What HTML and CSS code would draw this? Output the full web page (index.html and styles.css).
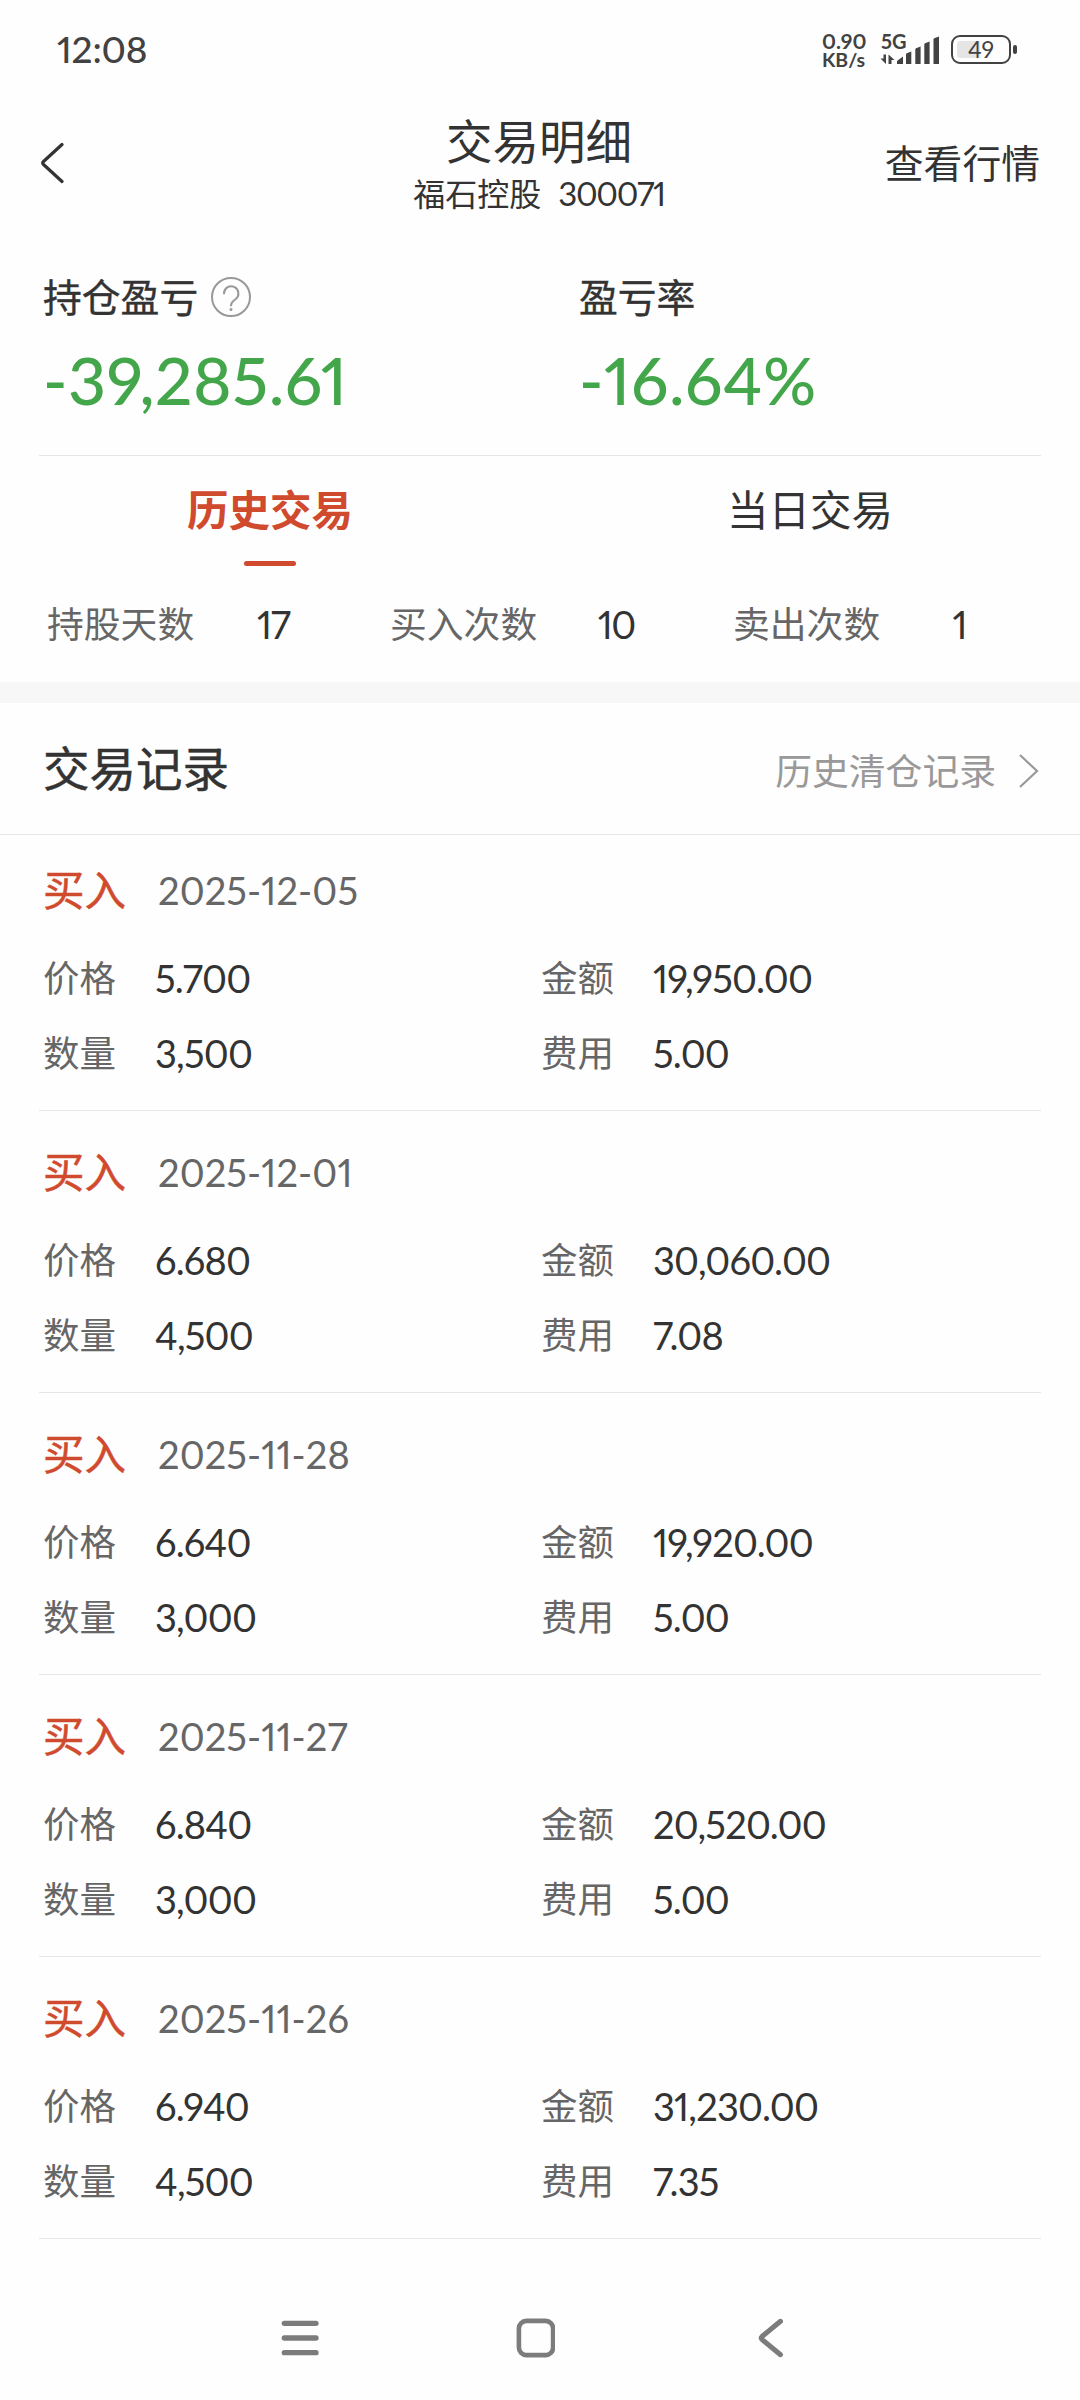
FILE: index.html
```
<!DOCTYPE html>
<html lang="zh-CN">
<head>
  <meta charset="UTF-8">
  <meta name="viewport" content="width=device-width, initial-scale=1.0">
  <title>交易明细</title>
  <link rel="stylesheet" href="styles.css">
</head>
<body>
  <div class="status-bar">
    <span class="time">12:08</span>
    <div class="net-speed"><span>0.90</span><span class="unit">KB/s</span></div>
    <div class="signal">
      <span class="network">5G</span>
      <svg width="60" height="28" viewBox="0 0 60 28" fill="#424242">
        <path d="M6 18.500v9.500L0.500 22.500H3.500V18.500zM8.500 28v-9.500l6 5.500h-3v4z"/>
        <path d="M17 28v-3l6-4.500V28zM26 28V18.500q0-.8.8-1.200l4.500-1.800V28zM35.300 28V13.500q0-.8.8-1.200l4.500-1.800V28zM44.300 28V8.500q0-.8.8-1.200l4.500-1.800V28zM53.500 28V3.500q0-.8.8-1.200L59 0.500V28z"/>
      </svg>
    </div>
    <div class="battery"><span>49</span></div>
  </div>

  <header class="header">
    <svg class="back" width="26" height="44" viewBox="0 0 26 44" fill="none" stroke="#333" stroke-width="3.2" stroke-linecap="round" stroke-linejoin="round">
      <path d="M22 3.500L3.500 20.500Q2 22 3.500 23.500L22 40.500"/>
    </svg>
    <div class="title">
      <h1>交易明细</h1>
      <p>福石控股<span>300071</span></p>
    </div>
    <a class="quote">查看行情</a>
  </header>

  <section class="summary">
    <div class="summary-item">
      <div class="summary-label">持仓盈亏
        <svg width="42" height="42" viewBox="0 0 42 42" fill="none" stroke="#999" stroke-width="2">
          <circle cx="21" cy="21" r="19"/>
          <path d="M14 17.500a7.200 7.200 0 1 1 11.800 5.500c-3 2.300-4.800 3-4.800 6.500" stroke-linecap="round"/>
          <circle cx="21" cy="33.500" r="1.500" fill="#999" stroke="none"/>
        </svg>
      </div>
      <div class="summary-value">-39,285.61</div>
    </div>
    <div class="summary-item">
      <div class="summary-label">盈亏率</div>
      <div class="summary-value">-16.64%</div>
    </div>
  </section>

  <nav class="tabs">
    <a class="tab active">历史交易</a>
    <a class="tab">当日交易</a>
  </nav>

  <div class="stats">
    <div class="stat">持股天数<span>17</span></div>
    <div class="stat">买入次数<span>10</span></div>
    <div class="stat">卖出次数<span>1</span></div>
  </div>

  <div class="records-head">
    <h2>交易记录</h2>
    <a class="history">历史清仓记录
      <svg width="22" height="36" viewBox="0 0 22 36" fill="none" stroke="#999" stroke-width="2.2">
        <path d="M2 2L19 18L2 34"/>
      </svg>
    </a>
  </div>

  <main class="records">
    <article class="record">
      <div class="record-top"><b>买入</b><time>2025-12-05</time></div>
      <dl>
        <dt>价格</dt><dd>5.700</dd><dt>金额</dt><dd>19,950.00</dd>
        <dt>数量</dt><dd>3,500</dd><dt>费用</dt><dd>5.00</dd>
      </dl>
    </article>
    <article class="record">
      <div class="record-top"><b>买入</b><time>2025-12-01</time></div>
      <dl>
        <dt>价格</dt><dd>6.680</dd><dt>金额</dt><dd>30,060.00</dd>
        <dt>数量</dt><dd>4,500</dd><dt>费用</dt><dd>7.08</dd>
      </dl>
    </article>
    <article class="record">
      <div class="record-top"><b>买入</b><time>2025-11-28</time></div>
      <dl>
        <dt>价格</dt><dd>6.640</dd><dt>金额</dt><dd>19,920.00</dd>
        <dt>数量</dt><dd>3,000</dd><dt>费用</dt><dd>5.00</dd>
      </dl>
    </article>
    <article class="record">
      <div class="record-top"><b>买入</b><time>2025-11-27</time></div>
      <dl>
        <dt>价格</dt><dd>6.840</dd><dt>金额</dt><dd>20,520.00</dd>
        <dt>数量</dt><dd>3,000</dd><dt>费用</dt><dd>5.00</dd>
      </dl>
    </article>
    <article class="record">
      <div class="record-top"><b>买入</b><time>2025-11-26</time></div>
      <dl>
        <dt>价格</dt><dd>6.940</dd><dt>金额</dt><dd>31,230.00</dd>
        <dt>数量</dt><dd>4,500</dd><dt>费用</dt><dd>7.35</dd>
      </dl>
    </article>
  </main>

  <footer class="nav-bar">
    <svg width="40" height="40" viewBox="0 0 40 40" stroke="#7c7c7c" stroke-width="5.3" stroke-linecap="round">
      <path d="M4.300 5.300H36M4.300 20H36M4.300 34.700H36"/>
    </svg>
    <svg width="40" height="40" viewBox="0 0 40 40" fill="none" stroke="#7c7c7c" stroke-width="4.6">
      <rect x="3.900" y="2.900" width="34.200" height="34.200" rx="7.500"/>
    </svg>
    <svg width="40" height="40" viewBox="0 0 40 40" fill="none" stroke="#7c7c7c" stroke-width="5" stroke-linecap="round" stroke-linejoin="round">
      <path d="M30.500 3.300L12 18.500Q10.300 20 12 21.500L30.500 36.700"/>
    </svg>
  </footer>
</body>
</html>
```
FILE: styles.css
```
* {
  box-sizing: border-box;
  margin: 0;
  padding: 0;
}

body {
  width: 1080px;
  height: 2400px;
  overflow: hidden;
  background: #fefefe;
  color: #333;
  font-family: Lato, "Noto Sans CJK SC", sans-serif;
  font-variant-numeric: proportional-nums;
  line-height: 1.2;
}

/* Status bar */
.status-bar {
  display: flex;
  align-items: center;
  height: 99px;
  margin-bottom: 1px;
  padding: 0 69px 0 57px;
  color: #424242;
}

.time {
  flex: 1;
  font-size: 37px;
  font-weight: 500;
  letter-spacing: -0.2px;
}

.net-speed {
  width: 58px;
  font-size: 21px;
  font-weight: bold;
  line-height: 19px;
}

.net-speed span {
  display: block;
}

.net-speed .unit {
  font-size: 19.5px;
}

.signal {
  position: relative;
  width: 60px;
  height: 28px;
  margin-right: 11px;
  font-weight: bold;
}

.network {
  position: absolute;
  top: -5px;
  left: 1px;
  font-size: 20px;
  line-height: 20px;
}

.signal svg {
  display: block;
}

.battery {
  position: relative;
  width: 60px;
  height: 29px;
  padding: 4px;
  border: 2.5px solid #424242;
  border-radius: 9px;
  background: linear-gradient(to right, #e5e5e5 23px, transparent 23px) content-box no-repeat;
  font-size: 23px;
  line-height: 16px;
  text-align: center;
}

.battery::after {
  content: "";
  position: absolute;
  top: 8px;
  right: -8px;
  width: 4px;
  height: 9px;
  border-radius: 2px;
  background: #424242;
}

/* Header */
.header {
  display: grid;
  grid-template-columns: 200px 1fr 200px;
  align-items: center;
  height: 126px;
  padding: 0 40px;
}

.title {
  padding: 4px 2px 0 0;
  text-align: center;
}

.title h1 {
  font-size: 46.5px;
  font-weight: 400;
  line-height: 56px;
}

.title p {
  font-size: 32px;
  line-height: 48px;
}

.title p span {
  margin-left: 17px;
  font-size: 33px;
  letter-spacing: -1.3px;
}

.quote {
  font-size: 38.8px;
  text-align: right;
}

/* Profit summary */
.summary {
  display: flex;
  height: 230px;
  margin: 0 39px;
  padding: 46px 0 0 4px;
  border-bottom: 1px solid #e6e6e6;
}

.summary-item {
  flex: none;
  width: 536px;
}

.summary-label {
  display: flex;
  align-items: center;
  height: 50px;
  gap: 12px;
  font-size: 38.8px;
  -webkit-text-stroke: 0.4px;
}

.summary-value {
  margin-top: 18px;
  color: #43a64a;
  font-size: 66px;
  font-weight: 500;
  line-height: 80px;
  letter-spacing: 0.5px;
}

/* Tabs */
.tabs {
  display: flex;
  height: 111px;
  padding-top: 24px;
}

.tab {
  display: flex;
  flex-direction: column;
  align-items: center;
  flex: 1;
  font-size: 41.5px;
  line-height: 60px;
}

.tab.active {
  color: #d04a2e;
  font-weight: bold;
}

.tab.active::after {
  content: "";
  width: 52px;
  height: 5px;
  margin-top: 21px;
  border-radius: 3px;
  background: #d04a2e;
}

.stats {
  display: flex;
  height: 136px;
  padding: 28px 0 0 47px;
  border-bottom: 21px solid #f7f7f7;
}

.stat {
  display: flex;
  flex: none;
  width: 343px;
  color: #666;
  font-size: 36.8px;
  line-height: 58px;
}

.stat span {
  width: 158px;
  color: #333;
  font-size: 38px;
  letter-spacing: -1.5px;
  text-align: center;
}

/* Record list */
.records-head {
  display: flex;
  justify-content: space-between;
  align-items: center;
  height: 132px;
  padding: 0 40px 0 43px;
  border-bottom: 1px solid #e6e6e6;
}

.records-head h2 {
  font-size: 46.5px;
  font-weight: 400;
  -webkit-text-stroke: 0.5px;
}

.history {
  display: flex;
  align-items: center;
  gap: 22px;
  padding-top: 5px;
  color: #999;
  font-size: 36.8px;
}

.records {
  margin: -6px 39px 0;
}

.record {
  height: 282px;
  padding: 32px 0 0 4px;
  border-bottom: 1px solid #e6e6e6;
}

.record-top {
  display: flex;
  align-items: center;
  height: 60px;
  color: #666;
  font-size: 38px;
}

.record-top b {
  width: 115px;
  color: #d04a2e;
  font-size: 41.5px;
  font-weight: 400;
  -webkit-text-stroke: 0.5px;
}

.record-top time {
  letter-spacing: 0.1px;
}

.record dl {
  display: grid;
  grid-template-columns: 112px 386px 112px 1fr;
  grid-auto-rows: 75px;
  align-items: center;
  margin-top: 20px;
}

.record dt {
  color: #666;
  font-size: 36.5px;
}

.record dd {
  font-size: 38px;
  letter-spacing: -0.8px;
}

/* Navigation buttons */
.nav-bar {
  display: flex;
  justify-content: space-between;
  width: 510px;
  margin: 79px 0 0 280px;
}
```
